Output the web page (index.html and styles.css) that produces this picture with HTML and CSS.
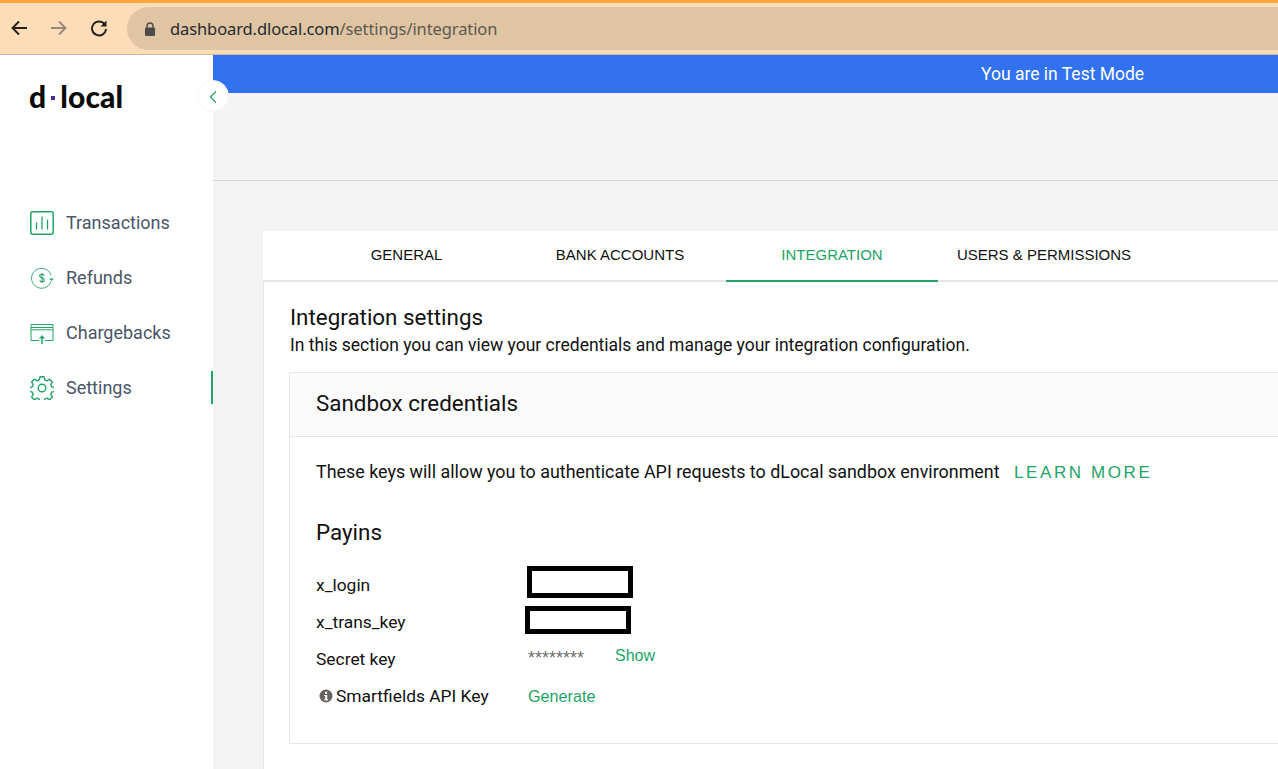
FILE: index.html
```html
<!DOCTYPE html>
<html lang="en">
<head>
<meta charset="utf-8">
<title>dLocal - Integration</title>
<link rel="stylesheet" href="styles.css">
</head>
<body>
<header class="browser">
  <div class="nav-buttons">
    <svg class="nav-icon" viewBox="0 0 18 18"><path d="M17 9H2.500M9 2.500L2.500 9 9 15.500" fill="none" stroke="#26211c" stroke-width="1.900"/></svg>
    <svg class="nav-icon" viewBox="0 0 18 18"><path d="M1 9h14.500M9 2.500L15.500 9 9 15.500" fill="none" stroke="#97897a" stroke-width="1.900"/></svg>
    <svg class="nav-icon" viewBox="0 0 18 18"><path d="M14.600 5.200A7 7 0 1 0 16 10" fill="none" stroke="#26211c" stroke-width="1.900"/><path d="M16.500 1.500v6h-6z" fill="#26211c"/></svg>
  </div>
  <div class="omnibox">
    <svg class="lock" viewBox="0 0 12 14"><path d="M3 6V4a3 3 0 0 1 6 0v2" fill="none" stroke="#4d4a48" stroke-width="1.400"/><rect x="1" y="5.500" width="10" height="8.500" rx="1.200" fill="#4d4a48"/></svg>
    <span class="url"><span class="url-host">dashboard.dlocal.com</span>/settings/integration</span>
  </div>
</header>
<div class="app">
  <aside class="sidebar">
    <div class="logo">d<span class="logo-dot"></span>local</div>
    <button class="collapse" type="button" aria-label="Collapse">
      <svg viewBox="0 0 10 14"><path d="M8 1.500L2.500 7 8 12.500" fill="none" stroke="#21a366" stroke-width="1.200"/></svg>
    </button>
    <nav class="menu">
      <a class="menu-item">
        <svg class="menu-icon" viewBox="0 0 24 24" fill="none" stroke="#21a366" stroke-width="1.500"><rect x="0.800" y="0.800" width="22.400" height="22.400" rx="2"/><path d="M6.500 18.500v-7M12 18.500V5.500M17.500 18.500V8.500" stroke-width="1.300"/></svg>
        <span>Transactions</span>
      </a>
      <a class="menu-item">
        <svg class="menu-icon" viewBox="0 0 24 24" fill="none" stroke="#21a366" stroke-width="0.900"><path d="M21 9A10 10 0 1 0 21 15.500"/><path d="M19 12.500h5l-2.500 2.500z" fill="#21a366" stroke="none"/><path d="M14.300 9.500c-.4-.8-1.200-1.200-2.300-1.200-1.300 0-2.300.7-2.300 1.800 0 2.500 4.700 1.400 4.700 3.900 0 1.200-1 1.800-2.400 1.800-1.100 0-1.900-.4-2.300-1.200M12 7v10" stroke-width="1.100"/></svg>
        <span>Refunds</span>
      </a>
      <a class="menu-item">
        <svg class="menu-icon" viewBox="0 0 24 24" fill="none" stroke="#21a366" stroke-width="1"><path d="M9 19.500H1V3.500h22v16h-8"/><path d="M1 6.500h22M1 8.800h22"/><path d="M12 23V15.500" stroke-width="1.500"/><path d="M9 17.500L12 14l3 3.500z" fill="#21a366" stroke="none"/></svg>
        <span>Chargebacks</span>
      </a>
      <a class="menu-item menu-item-active">
        <svg class="menu-icon" viewBox="0 0 24 24" fill="none" stroke="#21a366" stroke-width="1.400"><path d="M10 .8h4l.7 3 2.200 1 2.700-1.600 2.800 2.800-1.600 2.700 1 2.200 3 .7v3.800l-3 .7-1 2.200 1.600 2.700-2.800 2.800-2.700-1.600-2.200 1-.7 3h-4l-.7-3-2.200-1-2.700 1.600-2.800-2.800 1.600-2.700-1-2.200-3-.7v-3.800l3-.7 1-2.200-1.600-2.700 2.800-2.800 2.700 1.600 2.200-1z" stroke-linejoin="round"/><circle cx="12" cy="12" r="3.800"/></svg>
        <span>Settings</span>
      </a>
    </nav>
  </aside>
  <main class="main">
    <div class="test-banner">You are in Test Mode</div>
    <div class="page-header"></div>
    <section class="card">
      <div class="tabs">
        <a class="tab tab-general">GENERAL</a>
        <a class="tab tab-bank">BANK ACCOUNTS</a>
        <a class="tab tab-integration">INTEGRATION</a>
        <a class="tab tab-users">USERS &amp; PERMISSIONS</a>
      </div>
      <div class="content">
        <h1 class="title">Integration settings</h1>
        <p class="subtitle">In this section you can view your credentials and manage your integration configuration.</p>
        <div class="panel">
          <h2 class="panel-head">Sandbox credentials</h2>
          <div class="panel-body">
            <p class="intro">These keys will allow you to authenticate API requests to dLocal sandbox environment <a class="learn">LEARN MORE</a></p>
            <h3 class="payins">Payins</h3>
            <div class="cred cred-login"><span class="cred-label">x_login</span><span class="redact"></span></div>
            <div class="cred cred-trans"><span class="cred-label">x_trans_key</span><span class="redact redact-shift"></span></div>
            <div class="cred cred-secret"><span class="cred-label">Secret key</span><span class="stars">********</span><a class="link link-show">Show</a></div>
            <div class="cred cred-smart">
              <span class="cred-label cred-label-info">
                <svg class="info" viewBox="0 0 14 14"><circle cx="7" cy="7" r="6.500" fill="#66635f"/><rect x="6" y="2.800" width="2.200" height="2.200" fill="#fff"/><path d="M5.200 6h3v4.300h1v1.100H5.200v-1.100h1V7.100h-1z" fill="#fff"/></svg>
                Smartfields API Key
              </span>
              <a class="link link-generate">Generate</a>
            </div>
          </div>
        </div>
      </div>
    </section>
  </main>
</div>
</body>
</html>
```

FILE: styles.css
```css
* { box-sizing: border-box; }
html, body { margin: 0; height: 769px; overflow: hidden; }
body { font-family: Roboto, "Liberation Sans", sans-serif; background: #f4f4f4; color: #111; }
h1, h2, h3, p { margin: 0; font-weight: 400; }

.browser {
  height: 55px;
  background: #fddcb8;
  border-top: 3px solid #fba63f;
  border-bottom: 1px solid #d0b79b;
  display: flex;
  align-items: flex-start;
  padding-top: 4px;
}
.nav-buttons { width: 127px; flex: none; display: flex; gap: 22px; padding: 12px 0 0 10px; }
.nav-icon { width: 18px; height: 18px; flex: none; }
.omnibox {
  flex: 1;
  height: 43px;
  background: #dfc5a3;
  border-radius: 22px 0 0 22px;
  display: flex;
  align-items: center;
  padding-left: 17px;
}
.lock { width: 12px; height: 14px; margin-right: 14px; }
.url { font-family: "Noto Sans", Roboto, sans-serif; font-size: 16.500px; color: #5e5950; letter-spacing: -0.1px; }
.url-host { color: #26292c; }

.app { display: flex; height: 714px; }
.sidebar { width: 213px; flex: none; background: #fff; position: relative; padding: 22px 0 0 29px; }
.logo { font-family: Lato, "Open Sans", sans-serif; font-weight: 900; font-size: 30px; line-height: 38px; color: #0b0b0b; display: flex; align-items: center; letter-spacing: 0.1px; }
.logo-dot { width: 4px; height: 4px; background: #4b2d8f; margin: 3px 5px 0 5px; }
.collapse {
  position: absolute;
  left: 197px;
  top: 25px;
  width: 32px;
  height: 32px;
  border-radius: 50%;
  border: 1px solid #f4f4f4;
  background: #fff;
  padding: 2px 0 0;
  display: flex;
  align-items: center;
  justify-content: center;
  z-index: 2;
}
.collapse svg { width: 10px; height: 14px; }
.menu { display: flex; flex-direction: column; margin: 80px 0 0 -29px; }
.menu-item { height: 55px; display: flex; align-items: center; gap: 12px; padding-left: 30px; font-size: 18px; color: #4a5568; position: relative; }
.menu-icon { width: 24px; height: 24px; flex: none; }
.menu-item-active::after { content: ""; position: absolute; right: 0; top: 11px; width: 2px; height: 33px; background: #21a366; }

.main { flex: 1; min-width: 0; }
.test-banner { height: 38px; background: #3272f0; color: #fff; font-size: 17.500px; display: flex; align-items: center; padding: 0 0 1px 768px; }
.page-header { height: 88px; border-bottom: 1px solid #d9d9d9; }
.card { margin: 50px 0 0 50px; background: #fff; height: 540px; }
.tabs { height: 51px; display: flex; border-bottom: 2px solid #e6e6e6; font-family: "Liberation Sans", Arial, sans-serif; font-size: 15px; color: #111; }
.tab { display: flex; align-items: center; justify-content: center; height: 51px; padding-bottom: 4px; }
.tab-general { width: 251px; padding-left: 36px; }
.tab-bank { width: 212px; }
.tab-integration { width: 212px; color: #21a366; border-bottom: 2px solid #21a366; padding-bottom: 2px; }
.tab-users { width: 212px; }
.content { border-left: 1px solid #e6e6e6; padding: 22px 0 0 26px; height: 489px; }
.title { font-size: 22.400px; line-height: 26px; }
.subtitle { font-size: 17.500px; line-height: 24px; margin-top: 3px; }
.panel { margin: 15px 0 0 -1px; border: 1px solid #e6e6e6; border-right: 0; height: 372px; }
.panel-head { height: 64px; background: #fbfbfb; border-bottom: 1px solid #e6e6e6; font-size: 22.400px; line-height: 60px; padding-left: 26px; }
.panel-body { padding: 23px 0 0 26px; }
.intro { font-size: 17.900px; line-height: 24px; }
.learn { font-family: "Liberation Sans", Arial, sans-serif; font-size: 17px; letter-spacing: 2.600px; color: #21a366; margin-left: 10px; }
.payins { font-size: 22.400px; line-height: 26px; margin-top: 34px; }
.cred { display: flex; align-items: center; font-size: 17.400px; }
.cred-label { width: 211px; flex: none; }
.cred-login { margin-top: 21px; height: 37px; }
.cred-trans { height: 37px; }
.cred-secret { height: 37px; }
.cred-smart { height: 37px; }
.cred-label-info { display: flex; align-items: center; gap: 3px; padding-left: 3px; }
.info { width: 14px; height: 14px; flex: none; }
.redact { width: 106px; height: 32px; border: 5px solid #000; background: #fff; margin-top: -6px; }
.redact-shift { margin-left: -2px; height: 28px; margin-top: -3px; }
.stars { width: 87px; margin-left: 1px; font-family: "Liberation Sans", Arial, sans-serif; font-size: 18px; color: #6d6d6d; }
.link { font-family: "Liberation Sans", Arial, sans-serif; font-size: 16px; color: #21a366; }
.link-show { margin-top: -5px; }
.link-generate { font-size: 16.200px; margin: 2px 0 0 1px; }
```
